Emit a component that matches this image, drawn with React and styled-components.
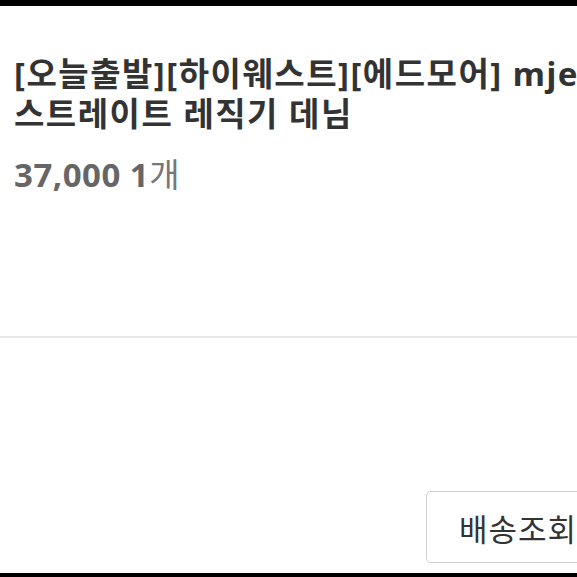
import React from "react";
import styled, { createGlobalStyle } from "styled-components";

const GlobalStyle = createGlobalStyle`
  html, body {
    margin: 0;
    padding: 0;
    background: #fff;
    overflow: hidden;
  }
  body {
    font-family: "Noto Sans", "Noto Sans CJK KR", sans-serif;
  }
`;

const Screen = styled.div`
  width: 577px;
  height: 577px;
  box-sizing: border-box;
  border-top: 6px solid #000;
  border-bottom: 4px solid #000;
  display: flex;
  flex-direction: column;
  overflow: hidden;
  background: #fff;
`;

const ProductInfo = styled.section`
  height: 332px;
  box-sizing: border-box;
  padding: 48px 0 0 14px;
  border-bottom: 2px solid #e8e8e8;
`;

const Title = styled.h1`
  margin: 0;
  font-size: 33px;
  line-height: 40px;
  font-weight: 700;
  color: #333;
  white-space: nowrap;
  letter-spacing: 1.5px;
`;

const Line = styled.span`
  display: block;
`;

const Price = styled.div`
  margin-top: 19px;
  font-size: 33px;
  line-height: 40px;
  color: #666;
  white-space: nowrap;
`;

const Amount = styled.strong`
  font-weight: 700;
  letter-spacing: 0.5px;
`;

const Unit = styled.span`
  font-family: "Noto Sans CJK KR", sans-serif;
  font-weight: 400;
  color: #777;
`;

const Actions = styled.div`
  flex: 1;
  display: flex;
  align-items: flex-end;
  padding: 0 0 10px 426px;
`;

const ActionButton = styled.button`
  flex-shrink: 0;
  width: 170px;
  height: 72px;
  box-sizing: border-box;
  padding: 0 0 0 32px;
  text-align: left;
  background: #fff;
  border: 1px solid #cfcfcf;
  border-radius: 5px;
  font-family: "Noto Sans CJK KR", sans-serif;
  font-size: 31px;
  font-weight: 400;
  letter-spacing: 1px;
  color: #333;
  white-space: nowrap;
`;

function App() {
  return (
    <>
      <GlobalStyle />
      <Screen>
        <ProductInfo>
          <Title>
            <Line>[오늘출발][하이웨스트][에드모어] mjeans</Line>
            <Line>스트레이트 레직기 데님</Line>
          </Title>
          <Price>
            <Amount>37,000 1</Amount>
            <Unit>개</Unit>
          </Price>
        </ProductInfo>
        <Actions>
          <ActionButton>배송조회</ActionButton>
        </Actions>
      </Screen>
    </>
  );
}

export default App;
